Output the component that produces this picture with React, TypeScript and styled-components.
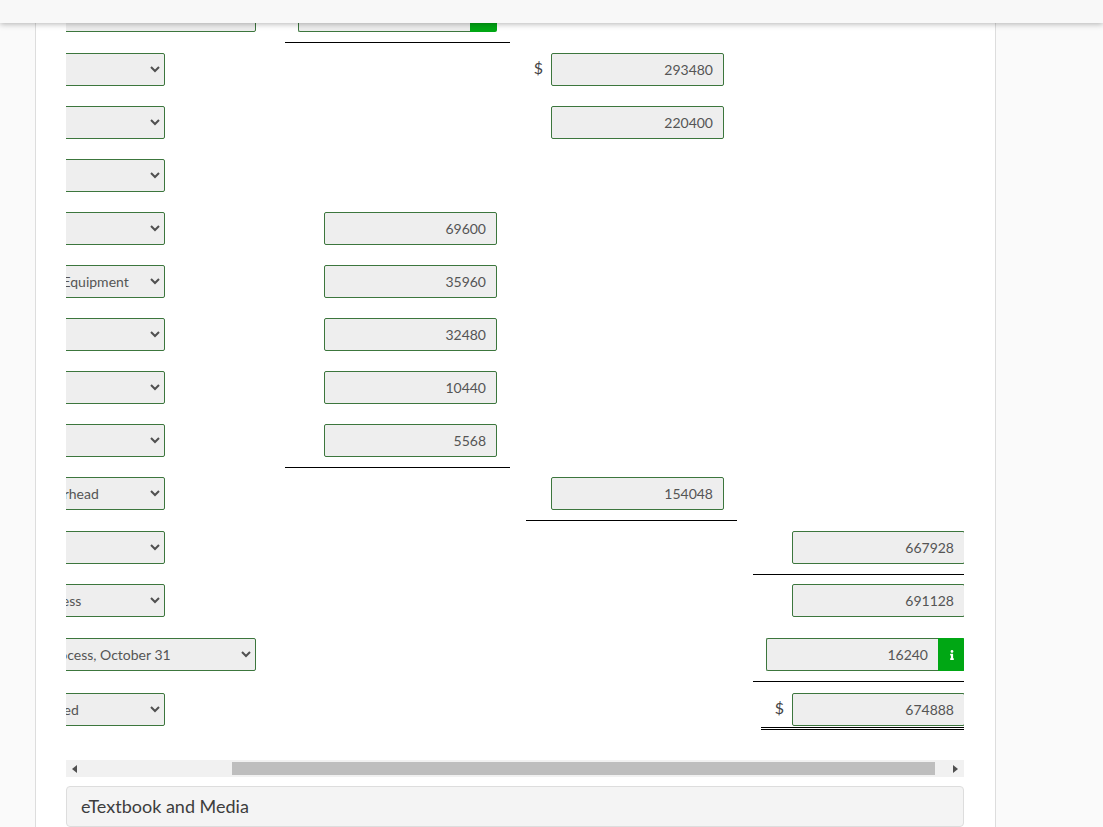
import React from "react";
import styled, { createGlobalStyle } from "styled-components";
import { FaInfo } from "react-icons/fa";

const Global = createGlobalStyle`
  html, body { margin: 0; padding: 0; height: 100%; overflow: hidden; background: #fafafa; }
  body { font-family: Lato, "Open Sans", sans-serif; font-size: 14px; color: #555; }
`;

const TopBar = styled.header`
  position: fixed;
  inset: 0 0 auto 0;
  height: 23px;
  background: #f8f8f8;
  box-shadow: 0 1px 6px rgba(0, 0, 0, 0.3);
  z-index: 2;
`;

const Card = styled.main`
  box-sizing: border-box;
  width: 961px;
  height: 827px;
  margin-left: 35px;
  padding-left: 30px;
  background: #fff;
  border-left: 1px solid #ddd;
  border-right: 1px solid #ddd;
  overflow: hidden;
`;

const Scroller = styled.div`
  width: 898px;
  margin-top: -1px;
  overflow: hidden;
`;

const Sheet = styled.div`
  width: 1001px;
  margin-left: -89px;
`;

const Row = styled.div<{ $height: number }>`
  display: grid;
  grid-template-columns: 308px 225px 227px 241px;
  height: ${(p) => p.$height}px;
  align-items: start;
`;

const LabelCell = styled.div``;

const Cell = styled.div<{ $rule?: "single" | "double"; $inset?: number }>`
  box-sizing: border-box;
  display: flex;
  justify-content: flex-end;
  align-items: center;
  gap: 8px;
  padding-right: 13px;
  padding-bottom: ${(p) => (p.$rule === "double" ? "1px" : p.$rule ? "10px" : "0")};
  margin-left: ${(p) => p.$inset ?? 0}px;
  border-bottom: ${(p) =>
    p.$rule === "double" ? "3px double #000" : p.$rule ? "1px solid #000" : "none"};
`;

const SelectWrap = styled.div<{ $wide?: boolean }>`
  position: relative;
  width: ${(p) => (p.$wide ? 279 : 188)}px;
  height: 33px;
`;

const Select = styled.select<{ $indent: number }>`
  box-sizing: border-box;
  display: block;
  width: 100%;
  height: 100%;
  appearance: none;
  padding: 0 24px 0 ${(p) => p.$indent}px;
  background: #eee;
  border: 1px solid #3c763d;
  border-radius: 2px;
  color: #555;
  font-family: Lato, "Open Sans", sans-serif;
  font-size: 14px;
`;

const Chevron = styled.svg`
  position: absolute;
  right: 5px;
  top: 13px;
  width: 10px;
  height: 7px;
  pointer-events: none;
`;

const Field = styled.div`
  box-sizing: border-box;
  width: 173px;
  height: 33px;
  padding: 0 10px;
  display: flex;
  align-items: center;
  justify-content: flex-end;
  background: #eee;
  border: 1px solid #3c763d;
  border-radius: 2px;
  color: #555;
`;

const Group = styled.div`
  display: flex;
  width: 199px;
  height: 33px;
`;

const GroupField = styled(Field)`
  flex: 1;
  width: auto;
  border-radius: 2px 0 0 2px;
  border-right: none;
`;

const Addon = styled.div`
  width: 27px;
  flex: none;
  display: flex;
  align-items: center;
  justify-content: center;
  background: #00a714;
  border-radius: 0 2px 2px 0;
  color: #fff;
  font-size: 10px;
`;

const Dollar = styled.span`
  font-size: 16px;
  color: #444;
  line-height: 1;
  margin-top: -3px;
`;

const Track = styled.div`
  display: flex;
  align-items: center;
  width: 898px;
  height: 17px;
  background: #f1f1f1;
`;

const TrackStart = styled.div`
  flex: none;
  width: 17px;
  display: flex;
  justify-content: center;
  color: #505050;
`;

const TrackEnd = styled.div`
  box-sizing: border-box;
  flex: none;
  width: 29px;
  padding-right: 6px;
  display: flex;
  justify-content: flex-end;
  color: #505050;
`;

const Thumb = styled.div`
  flex: none;
  width: 703px;
  height: 13px;
  background: #bebebe;
`;

const Spacer = styled.div`
  flex: 1;
`;

const Panel = styled.section`
  box-sizing: border-box;
  width: 898px;
  height: 41px;
  margin-top: 9px;
  padding: 0 0 1px 14px;
  display: flex;
  align-items: center;
  background: #f4f4f4;
  border: 1px solid #ddd;
  border-radius: 4px;
  font-size: 18px;
  color: #3d3d3d;
`;

const Caret = ({ dir }: { dir: "l" | "r" }) => (
  <svg width="5" height="8" viewBox="0 0 5 8" aria-hidden="true">
    <path d={dir === "l" ? "M5 0v8L0 4z" : "M0 0v8l5-4z"} fill="currentColor" />
  </svg>
);

type RowData = {
  h: number;
  label?: string;
  indent?: number;
  wide?: boolean;
  c2?: string;
  c2Rule?: boolean;
  c2Addon?: boolean;
  c3?: string;
  c3Dollar?: boolean;
  c3Rule?: boolean;
  c4?: string;
  c4Rule?: boolean;
  c4Addon?: boolean;
  c4Dollar?: boolean;
  c4Double?: boolean;
};

const rows: RowData[] = [
  { h: 54, wide: true, c2Addon: true, c2Rule: true },
  { h: 53, c3: "293480", c3Dollar: true },
  { h: 53, c3: "220400" },
  { h: 53 },
  { h: 53, c2: "69600" },
  { h: 53, label: "Depreciation-Equipment", indent: 0, c2: "35960" },
  { h: 53, c2: "32480" },
  { h: 53, c2: "10440" },
  { h: 53, c2: "5568", c2Rule: true },
  { h: 54, label: "Factory Overhead", indent: 11, c3: "154048", c3Rule: true },
  { h: 53, c4: "667928", c4Rule: true },
  { h: 54, label: "Work in Process", indent: 4, c4: "691128" },
  { h: 55, label: "Work in Process, October 31", indent: 16, wide: true, c4: "16240", c4Addon: true, c4Rule: true },
  { h: 67, label: "Manufactured", indent: 14, c4: "674888", c4Dollar: true, c4Double: true },
];

export default function App() {
  return (
    <>
      <Global />
      <TopBar />
      <Card>
        <Scroller>
          <Sheet>
            {rows.map((r, i) => (
              <Row key={i} $height={r.h}>
                <LabelCell>
                  <SelectWrap $wide={r.wide}>
                    <Select $indent={r.indent ?? 8} defaultValue={r.label ?? ""}>
                      <option value={r.label ?? ""}>{r.label ?? ""}</option>
                    </Select>
                    <Chevron viewBox="0 0 10 7" aria-hidden="true">
                      <path d="M1 1l4 4 4-4" fill="none" stroke="#505050" strokeWidth="2" />
                    </Chevron>
                  </SelectWrap>
                </LabelCell>
                <Cell $rule={r.c2Rule ? "single" : undefined}>
                  {r.c2Addon ? (
                    <Group>
                      <GroupField />
                      <Addon />
                    </Group>
                  ) : (
                    r.c2 && <Field>{r.c2}</Field>
                  )}
                </Cell>
                <Cell $inset={16} $rule={r.c3Rule ? "single" : undefined}>
                  {r.c3Dollar && <Dollar>$</Dollar>}
                  {r.c3 && <Field>{r.c3}</Field>}
                </Cell>
                <Cell
                  $inset={r.c4Double ? 24 : 16}
                  $rule={r.c4Double ? "double" : r.c4Rule ? "single" : undefined}
                >
                  {r.c4Dollar && <Dollar>$</Dollar>}
                  {r.c4Addon ? (
                    <Group>
                      <GroupField>{r.c4}</GroupField>
                      <Addon>
                        <FaInfo />
                      </Addon>
                    </Group>
                  ) : (
                    r.c4 && <Field>{r.c4}</Field>
                  )}
                </Cell>
              </Row>
            ))}
          </Sheet>
        </Scroller>
        <Track>
          <TrackStart>
            <Caret dir="l" />
          </TrackStart>
          <Spacer />
          <Thumb />
          <TrackEnd>
            <Caret dir="r" />
          </TrackEnd>
        </Track>
        <Panel>eTextbook and Media</Panel>
      </Card>
    </>
  );
}
